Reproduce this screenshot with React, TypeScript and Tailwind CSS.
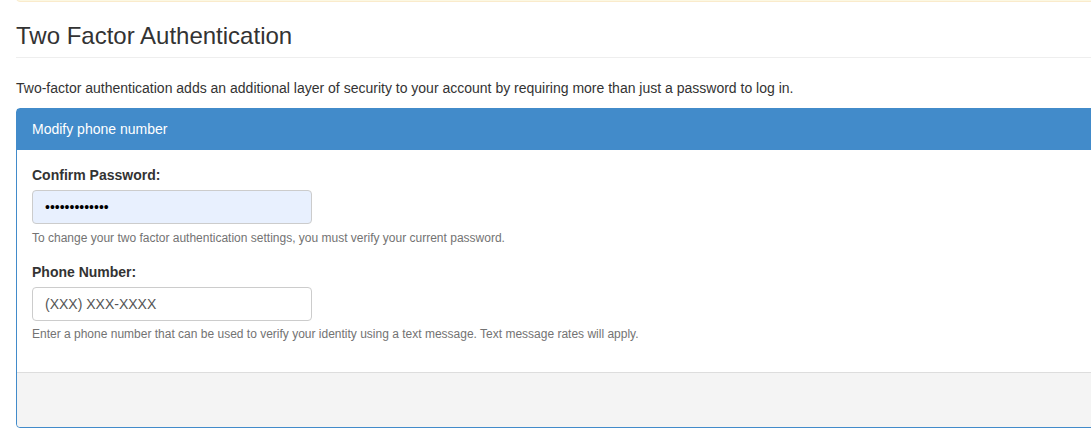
export default function App() {
  return (
    <div className="h-[439px] w-[1091px] overflow-hidden bg-white font-['Liberation_Sans',Arial,sans-serif] text-[14px] leading-[20px] text-[#333]">
      <div className="w-[1180px] pl-4">
        <div className="-mt-[10px] h-[12px] rounded-b border border-[#faebcc] bg-[#fcf8e3]" />
        <div className="mt-[21px] border-b border-[#eee] pb-[8px]">
          <h1 className="text-[24px] leading-[26px] font-normal">Two Factor Authentication</h1>
        </div>
        <p className="mt-[20px]">
          Two-factor authentication adds an additional layer of security to your account by requiring more than just a password to log in.
        </p>
        <div className="mt-[10px] rounded border border-[#428bca]">
          <div className="border-b border-[#428bca] bg-[#428bca] px-[15px] py-[10px] text-white">
            Modify phone number
          </div>
          <div className="px-[15px] pt-[15px] pb-[19px]">
            <div className="mb-[15px]">
              <label className="mb-[5px] block font-bold">Confirm Password:</label>
              <input
                type="password"
                defaultValue="passwordvalue"
                className="h-[34px] w-[280px] rounded border border-[#ccc] bg-[#e8f0fe] px-3 text-[14px] text-black outline-none"
              />
              <div className="mt-[6px] text-[12px] leading-[17px] text-[#737373]">
                To change your two factor authentication settings, you must verify your current password.
              </div>
            </div>
            <div className="mb-[10px]">
              <label className="mb-[5px] block font-bold">Phone Number:</label>
              <input
                type="text"
                placeholder="(XXX) XXX-XXXX"
                className="h-[34px] w-[280px] rounded border border-[#ccc] bg-white px-3 text-[14px] text-[#555] outline-none placeholder:text-[#555]"
              />
              <div className="mt-[5px] text-[12px] leading-[17px] text-[#737373]">
                Enter a phone number that can be used to verify your identity using a text message. Text message rates will apply.
              </div>
            </div>
          </div>
          <div className="h-[55px] rounded-b border-t border-[#ddd] bg-[#f4f4f4]" />
        </div>
      </div>
    </div>
  );
}
